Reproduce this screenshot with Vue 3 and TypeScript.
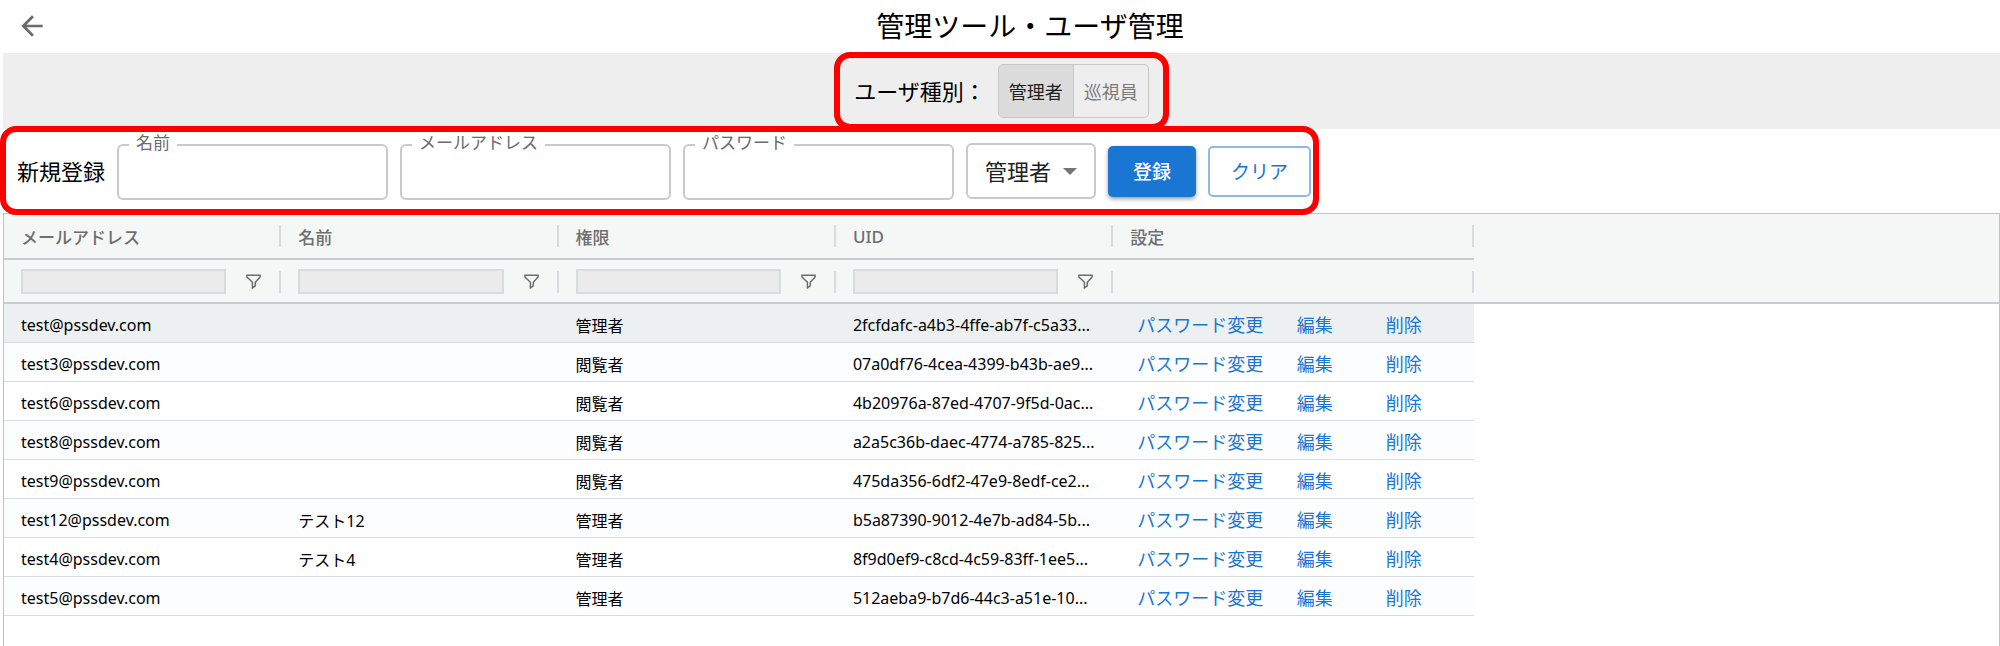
<script setup lang="ts">
import { ref } from 'vue'

interface User {
  email: string
  name: string
  role: string
  uid: string
}

interface Column {
  key: keyof User
  label: string
}

const columns: Column[] = [
  { key: 'email', label: 'メールアドレス' },
  { key: 'name', label: '名前' },
  { key: 'role', label: '権限' },
  { key: 'uid', label: 'UID' },
]

const users: User[] = [
  { email: 'test@pssdev.com', name: '', role: '管理者', uid: '2fcfdafc-a4b3-4ffe-ab7f-c5a33...' },
  { email: 'test3@pssdev.com', name: '', role: '閲覧者', uid: '07a0df76-4cea-4399-b43b-ae9...' },
  { email: 'test6@pssdev.com', name: '', role: '閲覧者', uid: '4b20976a-87ed-4707-9f5d-0ac...' },
  { email: 'test8@pssdev.com', name: '', role: '閲覧者', uid: 'a2a5c36b-daec-4774-a785-825...' },
  { email: 'test9@pssdev.com', name: '', role: '閲覧者', uid: '475da356-6df2-47e9-8edf-ce2...' },
  { email: 'test12@pssdev.com', name: 'テスト12', role: '管理者', uid: 'b5a87390-9012-4e7b-ad84-5b...' },
  { email: 'test4@pssdev.com', name: 'テスト4', role: '管理者', uid: '8f9d0ef9-c8cd-4c59-83ff-1ee5...' },
  { email: 'test5@pssdev.com', name: '', role: '管理者', uid: '512aeba9-b7d6-44c3-a51e-10...' },
]

const actions = ['パスワード変更', '編集', '削除']
const userTypes = ['管理者', '巡視員']
const selectedType = ref('管理者')

const name = ref('')
const email = ref('')
const password = ref('')
const role = ref('管理者')

function clearForm() {
  name.value = ''
  email.value = ''
  password.value = ''
}
</script>

<template>
  <div class="page">
    <header class="topbar">
      <button class="back" type="button" aria-label="戻る">
        <svg viewBox="0 0 24 24" aria-hidden="true">
          <path d="M20 11H7.830l5.590-5.590L12 4l-8 8 8 8 1.410-1.410L7.830 13H20v-2z" />
        </svg>
      </button>
      <h1>管理ツール・ユーザ管理</h1>
    </header>

    <section class="band">
      <div class="type-picker callout">
        <span id="type-label" class="lead">ユーザ種別：</span>
        <div class="toggle" role="group" aria-labelledby="type-label">
          <button
            v-for="type in userTypes"
            :key="type"
            type="button"
            :class="{ active: selectedType === type }"
            :aria-pressed="selectedType === type"
            @click="selectedType = type"
          >{{ type }}</button>
        </div>
      </div>
    </section>

    <form class="register callout" @submit.prevent>
      <h2 class="lead">新規登録</h2>
      <fieldset class="field">
        <legend><label for="name">名前</label></legend>
        <input id="name" v-model="name" type="text">
      </fieldset>
      <fieldset class="field">
        <legend><label for="email">メールアドレス</label></legend>
        <input id="email" v-model="email" type="text">
      </fieldset>
      <fieldset class="field">
        <legend><label for="password">パスワード</label></legend>
        <input id="password" v-model="password" type="password">
      </fieldset>
      <div class="role">
        <select v-model="role" aria-label="権限">
          <option>管理者</option>
          <option>閲覧者</option>
        </select>
        <svg viewBox="0 0 14 7" aria-hidden="true"><path d="M0 0h14L7 7z" /></svg>
      </div>
      <button class="btn primary" type="submit">登録</button>
      <button class="btn outlined" type="button" @click="clearForm">クリア</button>
    </form>

    <div class="grid">
      <table>
        <colgroup>
          <col v-for="column in columns" :key="column.key" class="col-data">
          <col class="col-actions">
          <col>
        </colgroup>
        <thead>
          <tr>
            <th v-for="column in columns" :key="column.key" scope="col">{{ column.label }}</th>
            <th scope="col">設定</th>
            <td class="filler"></td>
          </tr>
          <tr class="filters">
            <td v-for="column in columns" :key="column.key">
              <div class="filter">
                <input type="text" disabled :aria-label="column.label + ' フィルター'">
                <button type="button" :aria-label="column.label + ' フィルターメニュー'">
                  <svg viewBox="0 0 16 16" aria-hidden="true">
                    <path d="M1.800 2.200h12.400v1.600L9.700 8.700v3.500L7 14V8.700L1.800 3.800z" />
                  </svg>
                </button>
              </div>
            </td>
            <td></td>
            <td class="filler"></td>
          </tr>
        </thead>
        <tbody>
          <tr v-for="user in users" :key="user.email">
            <td v-for="column in columns" :key="column.key">{{ user[column.key] }}</td>
            <td>
              <div class="actions">
                <button v-for="action in actions" :key="action" type="button">{{ action }}</button>
              </div>
            </td>
            <td class="filler"></td>
          </tr>
        </tbody>
      </table>
    </div>
  </div>
</template>

<style>
body {
  background: #fff;
}
</style>

<style scoped>
.page {
  display: flex;
  flex-direction: column;
  box-sizing: border-box;
  min-height: 100vh;
  padding-left: 3px;
  font-family: "Noto Sans", "Noto Sans CJK JP", sans-serif;
  color: #000;
}

button,
input,
select {
  font-family: inherit;
}

button {
  padding: 0;
  border: 0;
  background: none;
  cursor: pointer;
}

h1,
h2 {
  margin: 0;
  font-weight: 400;
}

.topbar {
  display: flex;
  align-items: center;
  box-sizing: border-box;
  height: 53px;
  padding-bottom: 2px;
}

.topbar h1 {
  flex: 1;
  font-size: 28px;
  line-height: 48px;
  text-align: center;
}

.back {
  display: grid;
  place-items: center;
  width: 57px;
  height: 50px;
}

.back svg {
  width: 32px;
  height: 32px;
  fill: #6b6b6b;
}

.band {
  display: flex;
  justify-content: center;
  align-items: center;
  height: 76px;
  background: #eee;
}

.lead {
  font-size: 22px;
  line-height: 32px;
  white-space: nowrap;
}

.callout {
  position: relative;
}

.callout::after {
  content: "";
  position: absolute;
  z-index: 1;
  inset: -12px -20px;
  border: 6px solid #f00;
  border-radius: 16px;
  pointer-events: none;
}

.type-picker {
  display: flex;
  align-items: center;
  gap: 12px;
}

.toggle {
  display: flex;
  box-sizing: border-box;
  height: 54px;
  border: 1px solid #c8c8c8;
  border-radius: 5px;
  overflow: hidden;
}

.toggle button {
  padding: 0 10px;
  font-size: 18px;
  color: #7b7b7b;
}

.toggle button + button {
  border-left: 1px solid #c4c4c4;
}

.toggle .active {
  background: #dbdbdb;
  color: #212121;
}

.register {
  display: flex;
  align-items: center;
  align-self: flex-start;
  gap: 12px;
  box-sizing: border-box;
  height: 84px;
  padding: 0 8px 0 14px;
}

.register::after {
  inset: -3px 0 -2px -3px;
}

.field {
  box-sizing: border-box;
  width: 271px;
  height: 67px;
  margin: 0 0 10px;
  padding: 0 10px;
  border: 2px solid #c9c9c9;
  border-radius: 6px;
}

.field legend {
  padding: 0 7px 4px;
  font-size: 17px;
  line-height: 20px;
  color: #6b6b6b;
}

.field input {
  box-sizing: border-box;
  width: 100%;
  height: 40px;
  padding: 0 8px;
  border: 0;
  outline: 0;
  background: none;
  font-size: 22px;
}

.role {
  position: relative;
}

.role select {
  display: block;
  box-sizing: border-box;
  width: 130px;
  height: 56px;
  padding: 0 36px 0 17px;
  border: 2px solid #c9c9c9;
  border-radius: 6px;
  background: #fff;
  font-size: 22px;
  color: #212121;
  appearance: none;
}

.role svg {
  position: absolute;
  top: 25px;
  right: 19px;
  width: 14px;
  height: 7px;
  fill: #757575;
  pointer-events: none;
}

.btn {
  box-sizing: border-box;
  height: 51px;
  border-radius: 5px;
  font-size: 19px;
}

.primary {
  width: 88px;
  background: #1976d2;
  color: #fff;
  font-weight: 500;
  box-shadow: 0 2px 4px rgba(0, 0, 0, 0.4);
}

.outlined {
  width: 103px;
  border: 2px solid #8cbae8;
  color: #1976d2;
}

.grid {
  flex: 1;
  border: 1px solid #bdc3c7;
  border-bottom: 0;
}

table {
  width: 100%;
  border-collapse: separate;
  border-spacing: 0;
  table-layout: fixed;
  font-size: 16px;
}

.col-data {
  width: 13.9%;
}

.col-actions {
  width: 18.1%;
}

th,
td {
  box-sizing: border-box;
  padding: 0 17px;
  text-align: left;
  white-space: nowrap;
}

thead {
  background: #f5f7f7;
}

thead th,
thead td {
  height: 46px;
  border-bottom: 2px solid #c8cdd0;
  background: linear-gradient(#d9dcde, #d9dcde) right 11px / 2px 22px no-repeat;
  color: #6d6e6e;
  font-size: 17px;
  font-weight: 500;
}

thead .filters td {
  height: 44px;
}

thead .filler {
  border-bottom-color: transparent;
  background: none;
}

thead .filters .filler {
  border-bottom-color: #c8cdd0;
}

.filter {
  display: flex;
  align-items: center;
  justify-content: space-between;
}

.filter input {
  box-sizing: border-box;
  flex: 1;
  min-width: 0;
  height: 25px;
  margin-right: 19px;
  border: 2px solid #d8dcdc;
  background: #ebebeb;
}

.filter button {
  display: grid;
  margin-right: 2px;
}

.filter svg {
  width: 17px;
  height: 17px;
  fill: none;
  stroke: #6b6b6b;
  stroke-width: 1.400;
}

tbody td {
  height: 39px;
  padding-top: 4px;
  border-bottom: 1px solid #d9dcde;
}

tbody tr:nth-child(even) {
  background: #fcfdfe;
}

tbody tr:first-child {
  background: #ecf0f1;
}

tbody .filler {
  border-bottom: 0;
  background: #fff;
}

.actions {
  display: flex;
}

.actions button {
  min-width: 89px;
  padding: 0 7px;
  font-size: 18px;
  line-height: 32px;
  color: #1976d2;
}
</style>
